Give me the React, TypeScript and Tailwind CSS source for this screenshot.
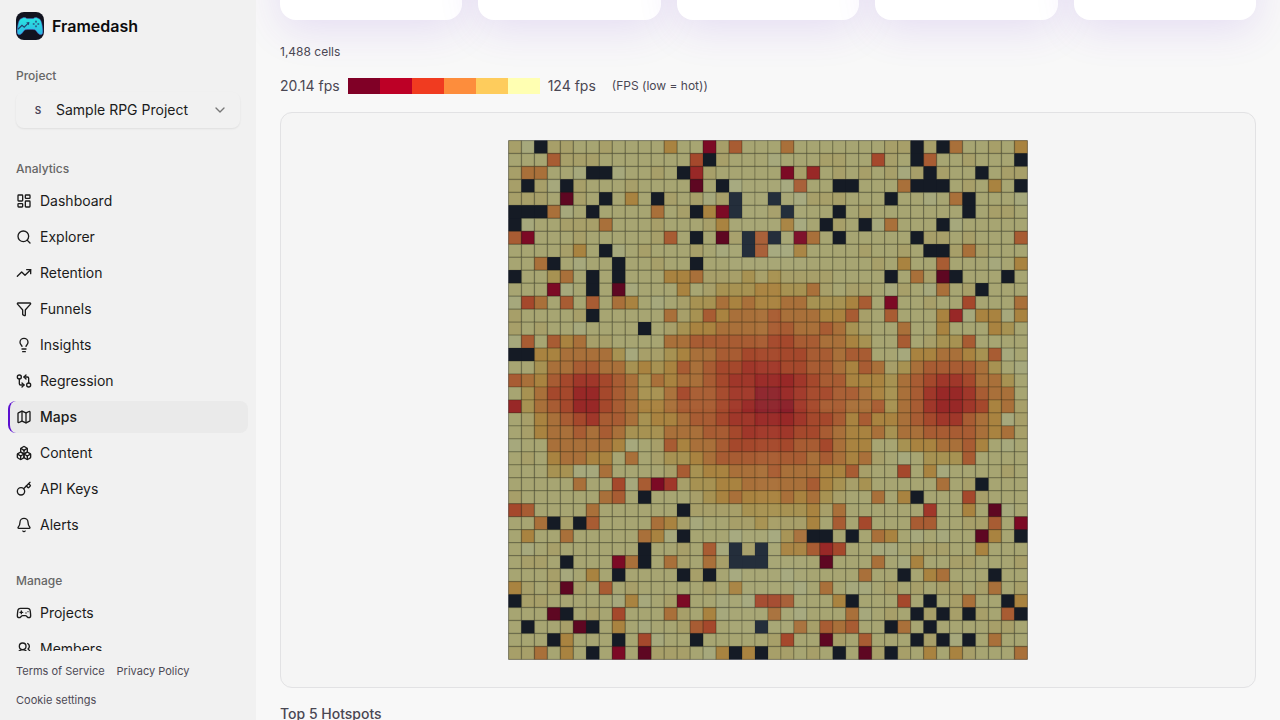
import {
  Bell,
  Boxes,
  ChevronDown,
  Funnel,
  Gamepad2,
  GitCompareArrows,
  Key,
  LayoutDashboard,
  Lightbulb,
  Map,
  Search,
  TrendingUp,
  UsersRound,
  type LucideIcon,
} from "lucide-react";

type NavItem = { label: string; icon: LucideIcon; active?: boolean };

const ANALYTICS: NavItem[] = [
  { label: "Dashboard", icon: LayoutDashboard },
  { label: "Explorer", icon: Search },
  { label: "Retention", icon: TrendingUp },
  { label: "Funnels", icon: Funnel },
  { label: "Insights", icon: Lightbulb },
  { label: "Regression", icon: GitCompareArrows },
  { label: "Maps", icon: Map, active: true },
  { label: "Content", icon: Boxes },
  { label: "API Keys", icon: Key },
  { label: "Alerts", icon: Bell },
];

const MANAGE: NavItem[] = [
  { label: "Projects", icon: Gamepad2 },
  { label: "Members", icon: UsersRound },
];

const LEGEND = [
  "bg-[#800026]",
  "bg-[#bd0026]",
  "bg-[#f03b20]",
  "bg-[#fd8d3c]",
  "bg-[#fecc5c]",
  "bg-[#ffffb2]",
];

// One character per cell, from "-" (fastest) to "M" (slowest). K and B hold no samples.
const CELL_COLORS: Record<string, string> = {
  "-": "#a6a87c",
  ".": "#a7a572",
  ",": "#a79f69",
  y: "#a79252",
  g: "#a98340",
  o: "#a9703a",
  r: "#a85c33",
  R: "#a5482c",
  S: "#a0372a",
  D: "#982827",
  E: "#8a1e2a",
  C: "#7c0a25",
  M: "#5e0722",
  K: "#151b25",
  B: "#1e2735",
};

const GRID = [
  ",-K,,..,....g..C,r.." + ".o.......,,K,Ko..,.g",
  "...r,,,.......RK,..." + "-...,,..R,.Kr..,...K",
  ",oo..-KK-..,.KD,...." + ".C,D.,.,.,-,K,..K.,,",
  ",K,-K,...,....M.K-.." + ".-r..KK...oKKK.,.g.K",
  ",,,.M,.K.g.K,.,-,B.." + "B.-,,,...K..-.oK...-",
  "KKKo-.K....o.,KgCB.." + ",B...K.,.......K.,,.",
  "K-..,,,o...,...,g..." + ".g-.K,.K-o...K-.....",
  "rC...,.....,r.K.M,Br" + "B.Co.K.....K,,.,...r",
  "....,g.K-.,...,.-.Br" + "--g....,..,.KK,o,...",
  "..oK.-..K..,..K....." + "........,.g..r...-.g",
  "K..yo.K.K...ggo,,,y," + "y,,,,....K.o,MK...K.",
  "...C-.K.M-...g.,yyyg" + "gyyo,.,,.-,.-o.,K...",
  "-Ro.r.r.og.-.,yyogog" + "gooyyygr.C..,..R...o",
  ",....,K.....o,yrgooo" + "roooggr,.r...gD-gg-g",
  ",.,..-....K.,yggoooo" + "rrooroy,..o..g...gy.",
  "-r.rgo,,....oorrrrrr" + "RRrroogy..r.,yyr....",
  "KKggooooy-,,ygoorrRR" + "RRRrrorr..-ggoogyr-.",
  "..yoorrooygygrorRRSS" + "SRRrrogro,yorrrroy.-",
  "rogrRSSRroyogoorRSSD" + "DDSRrrgggyorRSSRooy.",
  ".yoRRDDRroyyoRrrRSSE" + "EDSRRrrogyorSDDSroo.",
  "DyorRDDRroggorrrRSDE" + "EESRrrooryorSDDSRgo,",
  ".,gorRSrroyggorrRSSD" + "DDSRRrgrggorRSSrog-,",
  ".,goororoyyyooorrRSS" + "SSRRroggoyoorrrrogo,",
  "-..ooooog-.,rgoorRRR" + "RRrrRogg..yggoorg.-.",
  ".,.googg.o.,yygorrrr" + "rrrorogo,.-.yyyr....",
  "...yy--o....,ryggooo" + "roooggr,..R.g-....,.",
  ".....o..R-rCS,yyggoo" + "ooorgy,y.....o.,K...",
  ",......or.K...,ygogg" + "gogoy,..o.gK...R,...",
  "Rr....o......K,,,,yy" + "yyyg,o......S..g.M-.",
  "..oK,Kr....og,-..,,y" + ",,,g.r.R...rr..,,r.C",
  ".g..o.....og-K...-.." + "-yoKK.K.og.-.-..Mg.K",
  ".-.,......K..,.r-B,B" + ".ggrDR..--.,,,..g...",
  ".,,.K...CoK.o,.o,BBB" + "....M...o.-g..,,...,",
  "...,-.g.K....K,K.-.." + ".-.....o..K.go...K..",
  "g,.,M,.r.,.....,.g.." + "..-.o.--.,.,.,,.,o.,",
  "K,,.....-g-.,C..-.-R" + "Rr...gK...R.K.,o..Kg",
  "...MK.,.R...o,.g-..." + "o.-...o-.,.K,K,K,.rK",
  ".K..,MK.g.-..,rR...B" + "..o,ror..Ko.K....,,.",
  "...Kg...K.R-..K....." + ",R..M,.r...K,K-K.o..",
  ",,o.g.K.C.M,,,.-gKgK" + ",,.,.K.M,K,.g.g,...o",
];

const CELL = 13;

function Logo() {
  return (
    <svg width="28" height="28" viewBox="0 0 28 28" aria-hidden="true">
      <defs>
        <linearGradient id="pad" x1="0" y1="0" x2="0" y2="1">
          <stop offset="0" stopColor="#2ae6e2" />
          <stop offset="1" stopColor="#2cb6e2" />
        </linearGradient>
      </defs>
      <rect width="28" height="28" rx="8" fill="#11131f" />
      <path
        d="M6.500 6c1.500-.8 3.400-.5 4.200.6h6.600c.8-1.100 2.700-1.400 4.200-.6 2.600.5 3.600 2.600 4.300 5.500.7 3.200 1.300 7.200 1 9.200-.4 2.200-2.400 2.700-4 1.400-1.700-1.400-2.400-3.500-4-4.300-1.400-.5-8.200-.5-9.600 0-1.600.8-2.300 2.900-4 4.300-1.600 1.300-3.600.8-4-1.400-.3-2 .3-6 1-9.200C2.900 8.600 3.900 6.500 6.500 6z"
        fill="url(#pad)"
        stroke="#5146b8"
        strokeWidth=".5"
      />
      <path
        d="M1.900 17.200 6 13.200l2.200 1.900 3.600-3.500"
        fill="none"
        stroke="#22406e"
        strokeWidth="1.200"
      />
      <path d="m10.200 10.500 3.200-.5-.5 3.200z" fill="#22406e" />
      <g fill="#2a6b92">
        <circle cx="20" cy="9.700" r="1.100" />
        <circle cx="20" cy="14.300" r="1.100" />
        <circle cx="17.700" cy="12" r="1.100" />
        <circle cx="22.300" cy="12" r="1.100" />
      </g>
    </svg>
  );
}

function NavGroup({ title, items }: { title: string; items: NavItem[] }) {
  return (
    <div>
      <h2 className="flex h-8 items-center px-4 text-xs font-medium text-[#666666]">
        {title}
      </h2>
      <ul className="flex flex-col gap-1 px-2">
        {items.map(({ label, icon: Icon, active }) => (
          <li key={label}>
            <a
              href="#"
              aria-current={active ? "page" : undefined}
              className={`flex h-8 items-center gap-2 rounded-lg text-sm text-[#1b1b1b] ${
                active
                  ? "border-l-2 border-[#5b0fd0] bg-[#eaeaea] pl-[6px] font-medium"
                  : "pl-2"
              }`}
            >
              <Icon size={16} />
              {label}
            </a>
          </li>
        ))}
      </ul>
    </div>
  );
}

function Sidebar() {
  return (
    <aside className="flex w-64 shrink-0 flex-col bg-[#f1f1f1]">
      <div className="flex h-[52px] shrink-0 items-center gap-2 px-4">
        <Logo />
        <span className="text-base font-semibold text-[#0c0c0c]">Framedash</span>
      </div>

      <nav className="flex min-h-0 flex-1 flex-col gap-6 overflow-hidden pt-2">
        <div>
          <h2 className="flex h-8 items-center px-4 text-xs font-medium text-[#666666]">
            Project
          </h2>
          <div className="px-4 pb-px">
            <button className="flex h-9 w-full items-center rounded-lg px-3 text-sm text-[#1b1b1b] shadow-[0_1px_2px_rgba(0,0,0,0.08)]">
              <span className="w-5 text-center text-[10px] font-semibold text-[#4a4458]">
                S
              </span>
              <span className="ml-2 flex-1 text-left">Sample RPG Project</span>
              <ChevronDown size={16} className="text-[#777777]" />
            </button>
          </div>
        </div>
        <NavGroup title="Analytics" items={ANALYTICS} />
        <NavGroup title="Manage" items={MANAGE} />
      </nav>

      <footer className="flex shrink-0 flex-wrap gap-x-3 gap-y-[13px] px-4 pt-3 pb-3 text-[11px] leading-4 text-[#4d4a55]">
        <a href="#">Terms of Service</a>
        <a href="#">Privacy Policy</a>
        <button className="w-full text-left">Cookie settings</button>
      </footer>
    </aside>
  );
}

function Heatmap() {
  const size = GRID.length * CELL;
  return (
    <svg
      viewBox={`0 0 ${size} ${size}`}
      className="w-[520px] max-w-full"
      role="img"
      aria-label="FPS heatmap"
    >
      <g transform="translate(.5 .5) scale(.998)">
        <rect width={size} height={size} fill="#151b25" />
        {GRID.map((row, y) =>
          [...row].map((code, x) => (
            <rect
              key={`${x}-${y}`}
              x={x * CELL}
              y={y * CELL}
              width={CELL}
              height={CELL}
              fill={CELL_COLORS[code]}
              stroke={code === "K" || code === "B" ? "none" : "#1e1e0a"}
              strokeOpacity="0.17"
              strokeWidth="1.400"
            />
          )),
        )}
        {/* roads and plazas of the level below the cells */}
        <g fill="#d0e0f0" fillOpacity="0.04">
          <rect x="221" y="39" width="78" height="91" />
          <rect x="221" y="390" width="78" height="104" />
        </g>
        <g fill="#ffe0a0" fillOpacity="0.03">
          <rect x="250" y="130" width="20" height="260" />
          <rect x="131" y="248" width="258" height="21" />
        </g>
      </g>
    </svg>
  );
}

export default function App() {
  return (
    <div className="flex h-screen overflow-hidden bg-[#f8f8f8] font-['Inter',sans-serif]">
      <Sidebar />
      <main className="min-w-0 flex-1 overflow-hidden px-6">
        <div className="-mt-24 grid grid-cols-5 gap-4">
          {[0, 1, 2, 3, 4].map((n) => (
            <div
              key={n}
              className="h-[116px] rounded-2xl bg-white shadow-[0_10px_40px_rgba(110,50,220,0.13)]"
            />
          ))}
        </div>

        <p className="mt-6 text-xs text-[#4a4753]">1,488 cells</p>

        <div className="mt-4 flex h-5 items-center gap-2 text-sm text-[#4a4753]">
          <span>20.14 fps</span>
          <div className="flex">
            {LEGEND.map((color) => (
              <span key={color} className={`h-4 w-8 ${color}`} />
            ))}
          </div>
          <span>124 fps</span>
          <span className="ml-2 text-xs">(FPS (low = hot))</span>
        </div>

        <section className="mt-4 flex justify-center rounded-xl border border-[#e2e2e4] bg-[#f5f5f5] py-[27px]">
          <Heatmap />
        </section>

        <h3 className="mt-4 text-sm font-medium text-[#4a4753]">Top 5 Hotspots</h3>
      </main>
    </div>
  );
}
